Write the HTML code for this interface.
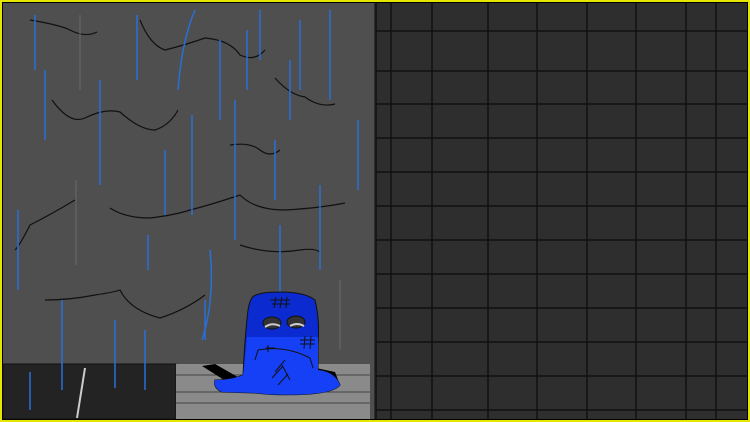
<!DOCTYPE html><html><head><style>body{margin:0;background:#000}svg{display:block}</style></head><body>
<svg width="750" height="422" viewBox="0 0 750 422" xmlns="http://www.w3.org/2000/svg">
<rect width="750" height="422" fill="#000"/>
<rect x="3" y="3" width="744" height="416" fill="#4f4f4f"/>
<!-- right building -->
<rect x="374" y="3" width="373" height="416" fill="#2e2e2e"/>
<g stroke="#111" stroke-width="1.5" fill="none">
<path d="M376 3V419"/>
<path d="M391 3V419M432 3V419M488 3V419M537 3V419M587 3V419M636 3V419M686 3V419M716 3V419"/>
<path d="M376 31H747M376 71H747M376 104H747M376 138H747M376 172H747M376 206H747M376 240H747M376 274H747M376 308H747M376 342H747M376 376H747M376 410H747"/>
</g>
<!-- ground -->
<rect x="3" y="364" width="173" height="55" fill="#232323" stroke="#111"/>
<rect x="176" y="364" width="194" height="55" fill="#8a8a8a"/>
<g stroke="#444" stroke-width="1"><path d="M176 375H370M176 392H370M176 403H370"/></g>
<path d="M85 368 L77 418" stroke="#ccc" stroke-width="2"/>
<!-- wall cracks -->
<g stroke="#111" stroke-width="1.2" fill="none">
<path d="M30 20 Q60 25 70 30 Q85 38 97 32"/>
<path d="M140 20 Q150 45 165 50 Q185 45 205 38 Q230 40 240 55 Q255 62 265 50"/>
<path d="M275 78 Q290 95 305 97 Q320 108 335 104"/>
<path d="M52 100 Q70 125 85 118 Q105 108 120 112 Q140 130 155 130 Q170 125 178 110"/>
<path d="M230 145 Q250 142 260 150 Q270 158 280 150"/>
<path d="M75 200 Q50 215 30 225 Q20 245 15 250"/>
<path d="M110 208 Q125 218 150 218 Q175 215 190 210 Q210 205 240 195 Q255 210 285 210 Q320 208 345 203"/>
<path d="M240 245 Q270 255 300 250 Q315 248 320 252"/>
<path d="M45 300 Q70 300 95 295 Q115 292 120 290 Q130 310 160 318 Q185 310 205 295"/>
</g>
<!-- rain -->
<g stroke="#2a6fd6" stroke-width="1.5" fill="none">
<path d="M35 15V70M45 70V140M100 80V185M137 15V80M165 150V215M192 115V215M235 100V240M260 10V60M275 140V200M300 20V90M330 10V100M358 120V190M18 210V290M148 235V270M62 300V390M30 372V410M115 320V388M145 330V390M205 300V340M220 40V120M290 60V120M195 10Q182 40 178 90M247 30V90M320 185V270M280 225V350M210 250Q215 300 202 340"/>
<path d="M145 0V0"/>
</g>
<g stroke="#6a6a6a" stroke-width="1"><path d="M76 180V265M80 15V90M340 280V350"/></g>
<!-- blob shadow -->
<path d="M202 366 L215 364 L243 380 L232 385 Z" fill="#000"/>
<path d="M316 368 L335 372 L340 385 L318 382Z" fill="#000"/>
<!-- blob -->
<path d="M254 296 Q260 292 280 292 Q305 292 315 300 Q320 320 318 345 L318 370 Q335 372 340 385 Q335 392 310 394 Q280 396 255 393 L222 392 Q213 388 215 380 Q232 380 243 375 Q245 335 248 310 Q250 298 254 296Z" fill="#0b2ad0" stroke="#111"/>
<path d="M247 337 Q245 360 243 375 Q232 380 215 380 Q213 388 222 392 L255 393 Q280 396 310 394 Q335 392 340 385 Q335 372 318 370 L318 337 Z" fill="#1540f5"/>
<g stroke="#111" stroke-width="1" fill="none">
<path d="M270 300H290M272 304H290M276 297L274 308M282 297L280 308M287 297L286 308"/>
<path d="M258 350 Q285 345 310 358 M258 350 L255 360 M310 358 L313 368"/>
<path d="M275 372L285 360M272 378L283 366M278 385L288 374M282 365L290 380"/>
<path d="M300 340H315M300 344H315M305 336L304 349M311 336L310 349"/>
<path d="M266 348H275M268 345L268 352"/>
</g>
<ellipse cx="272" cy="323" rx="9" ry="6" fill="#333" stroke="#111"/>
<ellipse cx="296" cy="322" rx="9" ry="6" fill="#333" stroke="#111"/>
<path d="M265 327 Q272 322 280 326" stroke="#ccc" stroke-width="2" fill="none"/>
<path d="M290 326 Q297 322 304 326" stroke="#ccc" stroke-width="2" fill="none"/>
<rect x="1" y="1" width="748" height="420" fill="none" stroke="#e6e600" stroke-width="2"/>
</svg>
</body></html>
